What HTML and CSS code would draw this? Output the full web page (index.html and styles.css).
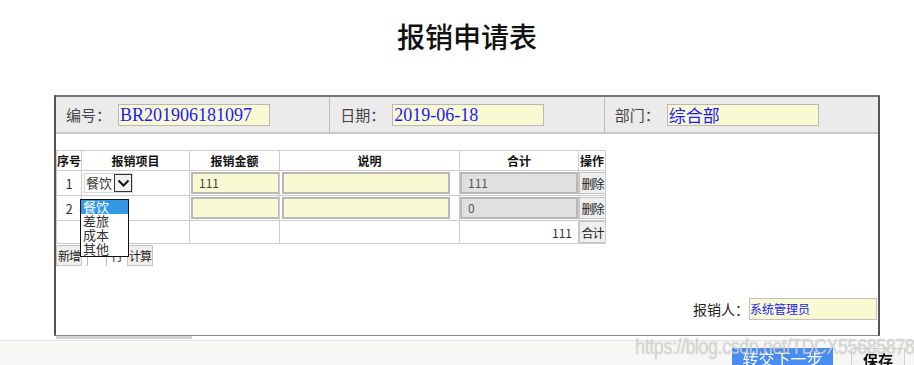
FILE: index.html
```html
<!DOCTYPE html>
<html lang="zh-CN">

<head>
    <meta charset="UTF-8">
    <title>报销申请表</title>
    <link rel="stylesheet" href="styles.css">
</head>

<body>
    <div class="title">报销申请表</div>
    <div class="sheet">
        <div class="sheet-head">
            <div class="head-cell">
                <span class="head-label">编号：</span>
                <span class="head-input latin">BR201906181097</span>
            </div>
            <div class="head-cell">
                <span class="head-label">日期：</span>
                <span class="head-input latin">2019-06-18</span>
            </div>
            <div class="head-cell">
                <span class="head-label">部门：</span>
                <span class="head-input">综合部</span>
            </div>
        </div>
        <div class="sheet-body">
            <table class="items">
                <colgroup>
                    <col class="c-no">
                    <col class="c-type">
                    <col class="c-amount">
                    <col class="c-note">
                    <col class="c-sum">
                    <col class="c-op">
                </colgroup>
                <tr class="head-row">
                    <th>序号</th>
                    <th>报销项目</th>
                    <th>报销金额</th>
                    <th>说明</th>
                    <th>合计</th>
                    <th>操作</th>
                </tr>
                <tr class="item-row">
                    <td class="no">1</td>
                    <td>
                        <div class="select">
                            <span class="select-text">餐饮</span>
                            <span class="select-arrow">
                                <svg width="13" height="9" viewBox="0 0 13 9">
                                    <path d="M1.5 1.5 L6.5 6.5 L11.5 1.5" fill="none" stroke="#111" stroke-width="2"/>
                                </svg>
                            </span>
                            <ul class="select-list">
                                <li class="on">餐饮</li>
                                <li>差旅</li>
                                <li>成本</li>
                                <li>其他</li>
                            </ul>
                        </div>
                    </td>
                    <td><div class="field full">111</div></td>
                    <td><div class="field note"></div></td>
                    <td><div class="field sum">111</div></td>
                    <td><button class="cell-btn">删除</button></td>
                </tr>
                <tr class="item-row">
                    <td class="no">2</td>
                    <td></td>
                    <td><div class="field full"></div></td>
                    <td><div class="field note"></div></td>
                    <td><div class="field sum">0</div></td>
                    <td><button class="cell-btn">删除</button></td>
                </tr>
                <tr class="total-row">
                    <td></td>
                    <td></td>
                    <td></td>
                    <td></td>
                    <td class="total">111</td>
                    <td><button class="cell-btn">合计</button></td>
                </tr>
            </table>
            <div class="tools">
                <button class="tool-btn">新增</button>
                <span class="tool-input"></span>
                <span class="tool-text">行</span>
                <button class="tool-btn">计算</button>
            </div>
            <div class="applicant">
                <span class="applicant-label">报销人：</span>
                <span class="applicant-input">系统管理员</span>
            </div>
        </div>
    </div>
    <div class="sheet-tail"></div>

    <div class="footer">
        <button class="btn-next">转交下一步</button>
        <button class="btn-save">保存</button>
    </div>
    <div class="watermark">https://blog.csdn.net/TDCX55685878</div>
</body>

</html>
```

FILE: styles.css
```css
body {
    margin: 0;
    padding: 0;
    background: #fff;
    font-family: "Noto Sans CJK SC", sans-serif;
    color: #222;
    overflow: hidden;
}

.title {
    margin: 16px 0 39px 54px;
    width: 826px;
    text-align: center;
    font-size: 28px;
    line-height: 40px;
    font-weight: 500;
    color: #111;
}

.sheet {
    margin-left: 54px;
    width: 822px;
    border-left: 2px solid #555;
    border-right: 2px solid #555;
    border-top: 2px solid #777;
    border-bottom: 1px solid #888;
}

.sheet-head {
    display: flex;
    height: 35px;
    background: #ebebeb;
    border-bottom: 2px solid #c8c8c8;
}

.head-cell {
    flex: 1;
    display: flex;
    align-items: center;
    padding-left: 10px;
    border-right: 1px solid #bcbcbc;
}

.head-cell:last-child {
    border-right: none;
}

.head-label {
    width: 52px;
    font-size: 15px;
    color: #444;
}

.head-input {
    box-sizing: border-box;
    width: 152px;
    height: 22px;
    line-height: 20px;
    padding-left: 1px;
    border: 1px solid #b8b8b8;
    background: #fafad2;
    color: #1a1aff;
    font-size: 17px;
    white-space: nowrap;
}

.latin {
    font-family: "Liberation Serif", serif;
    font-size: 18px;
}

.sheet-body {
    padding-top: 16px;
    padding-bottom: 15px;
}

.items {
    border-collapse: collapse;
    table-layout: fixed;
    width: 549px;
    font-size: 12px;
}

.c-no { width: 25px; }
.c-type { width: 108px; }
.c-amount { width: 90px; }
.c-note { width: 180px; }
.c-sum { width: 119px; }
.c-op { width: 27px; }

.items th,
.items td {
    border: 1px solid #cccccc;
    padding: 0;
    white-space: nowrap;
}

.items th {
    height: 19px;
    font-weight: bold;
    color: #111;
    text-align: center;
}

.item-row td {
    height: 24px;
}

.total-row td {
    height: 22px;
}

.no {
    text-align: center;
    font-size: 13px;
    color: #333;
}

.select {
    position: relative;
    display: flex;
    align-items: center;
    width: 47px;
    height: 18px;
    margin-left: 2px;
    border: 1px solid #d8d8d8;
    background: #fff;
}

.select-text {
    flex: 1;
    font-size: 13px;
    line-height: 18px;
    color: #333;
    padding-left: 1px;
}

.select-arrow {
    display: flex;
    align-items: center;
    justify-content: center;
    width: 16px;
    height: 16px;
    border: 1px solid #333;
    background: #f2f2f2;
}

.select-list {
    position: absolute;
    left: -5px;
    top: 25px;
    z-index: 2;
    width: 47px;
    margin: 0;
    padding: 0;
    list-style: none;
    background: #fff;
    border: 1px solid #111;
}

.select-list li {
    height: 14px;
    line-height: 14px;
    padding-left: 2px;
    font-size: 13px;
    color: #333;
}

.select-list li.on {
    background: #3399e6;
    color: #fff;
}

.field {
    box-sizing: border-box;
    height: 22px;
    line-height: 18px;
    padding-left: 6px;
    border: 2px solid #b8b8b8;
    background: #fafad2;
    font-size: 12px;
    color: #444;
}

.field.full {
    width: 89px;
    margin-left: 1px;
}

.field.note {
    width: 168px;
    margin-left: 2px;
}

.field.sum {
    width: 118px;
    background: #e0e0e0;
    color: #555;
}

.total {
    text-align: right;
    padding-right: 6px !important;
    color: #333;
}

.cell-btn {
    display: block;
    width: 27px;
    height: 22px;
    padding: 0;
    border: 1px solid #c4c4c4;
    background: #efefef;
    font-family: "Noto Sans CJK SC", sans-serif;
    font-size: 12px;
    letter-spacing: -1px;
    color: #222;
}

.tools {
    display: flex;
    align-items: center;
    height: 21px;
    margin-top: 1px;
    font-size: 12px;
}

.tool-btn {
    height: 21px;
    width: 26px;
    padding: 0;
    border: 1px solid #c4c4c4;
    background: #efefef;
    font-family: "Noto Sans CJK SC", sans-serif;
    font-size: 12px;
    letter-spacing: -1px;
    color: #222;
}

.tool-input {
    width: 18px;
    height: 14px;
    margin: 5px 4px 0 5px;
    border: 1px solid #bbb;
    border-bottom: none;
}

.tool-text {
    width: 16px;
}

.applicant {
    display: flex;
    justify-content: flex-end;
    align-items: center;
    margin-top: 32px;
    padding-right: 1px;
}

.applicant-label {
    font-size: 14px;
    color: #222;
}

.applicant-input {
    box-sizing: border-box;
    width: 128px;
    height: 22px;
    line-height: 20px;
    border: 1px solid #c0c0c0;
    background: #fafad2;
    color: #1a1aff;
    font-size: 12px;
}

.sheet-tail {
    margin-left: 56px;
    width: 136px;
    height: 3px;
    background: #d2d2d2;
}

.footer {
    position: fixed;
    left: 0;
    right: 0;
    bottom: 0;
    height: 17px;
    background: #f7f7f5;
    border-top: 1px solid #e2e2e2;
    display: flex;
    align-items: flex-start;
    justify-content: flex-end;
    padding-right: 9px;
    padding-top: 7px;
}

.btn-next {
    flex: none;
    width: 101px;
    height: 30px;
    margin-right: 18px;
    padding: 0 0 10px;
    border: none;
    background: #4a8df0;
    color: #fff;
    font-family: "Noto Sans CJK SC", sans-serif;
    font-size: 16px;
    line-height: 20px;
}

.btn-save {
    flex: none;
    width: 54px;
    height: 30px;
    padding: 0 0 10px;
    border: 1px solid #d0d0d0;
    background: #f4f4f4;
    color: #111;
    font-family: "Noto Sans CJK SC", sans-serif;
    font-size: 15px;
    font-weight: bold;
    line-height: 22px;
}

.watermark {
    position: fixed;
    right: 0;
    bottom: 5px;
    font-family: "Liberation Sans", sans-serif;
    font-size: 22px;
    letter-spacing: -0.6px;
    transform: scaleX(0.82);
    transform-origin: right bottom;
    color: rgba(255, 255, 255, 0.55);
    text-shadow: 0 0 1px rgba(120, 120, 120, 0.7);
    white-space: nowrap;
}
```
